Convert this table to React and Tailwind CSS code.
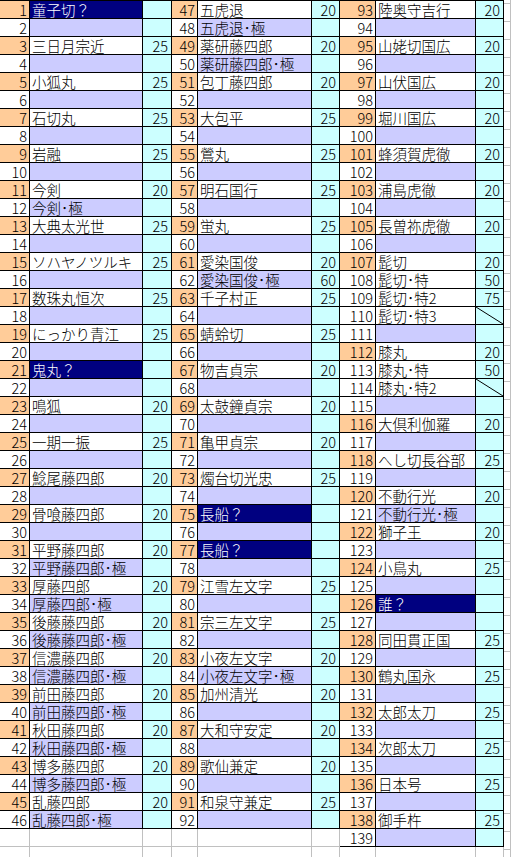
import React from "react";

const ORANGE = "bg-[#ffcc99]";
const LAV = "bg-[#ccccff]";
const CYAN = "bg-[#ccffff]";
const NAVY = "bg-[#000080] text-white";
const WHITE = "bg-white";

function std(num, name, value) {
  const odd = num % 2 === 1;
  return { num, name, value, numBg: odd ? ORANGE : WHITE, nameBg: odd ? WHITE : LAV };
}

const g1Names = {
  1: ["童子切？", ""], 3: ["三日月宗近", "25"], 5: ["小狐丸", "25"], 7: ["石切丸", "25"], 9: ["岩融", "25"],
  11: ["今剣", "20"], 12: ["今剣･極", ""], 13: ["大典太光世", "25"], 15: ["ソハヤノツルキ", "25"],
  17: ["数珠丸恒次", "25"], 19: ["にっかり青江", "25"], 21: ["鬼丸？", ""], 23: ["鳴狐", "20"],
  25: ["一期一振", "25"], 27: ["鯰尾藤四郎", "20"], 29: ["骨喰藤四郎", "20"], 31: ["平野藤四郎", "20"],
  32: ["平野藤四郎･極", ""], 33: ["厚藤四郎", "20"], 34: ["厚藤四郎･極", ""], 35: ["後藤藤四郎", "20"],
  36: ["後藤藤四郎･極", ""], 37: ["信濃藤四郎", "20"], 38: ["信濃藤四郎･極", ""], 39: ["前田藤四郎", "20"],
  40: ["前田藤四郎･極", ""], 41: ["秋田藤四郎", "20"], 42: ["秋田藤四郎･極", ""], 43: ["博多藤四郎", "20"],
  44: ["博多藤四郎･極", ""], 45: ["乱藤四郎", "20"], 46: ["乱藤四郎･極", ""],
};
const g2Names = {
  47: ["五虎退", "20"], 48: ["五虎退･極", ""], 49: ["薬研藤四郎", "20"], 50: ["薬研藤四郎･極", ""],
  51: ["包丁藤四郎", "20"], 53: ["大包平", "25"], 55: ["鶯丸", "25"], 57: ["明石国行", "25"], 59: ["蛍丸", "25"],
  61: ["愛染国俊", "20"], 62: ["愛染国俊･極", "60"], 63: ["千子村正", "25"], 65: ["蜻蛉切", "25"],
  67: ["物吉貞宗", "20"], 69: ["太鼓鐘貞宗", "20"], 71: ["亀甲貞宗", "20"], 73: ["燭台切光忠", "25"],
  75: ["長船？", ""], 77: ["長船？", ""], 79: ["江雪左文字", "25"], 81: ["宗三左文字", "25"],
  83: ["小夜左文字", "20"], 84: ["小夜左文字･極", ""], 85: ["加州清光", "20"], 87: ["大和守安定", "20"],
  89: ["歌仙兼定", "20"], 91: ["和泉守兼定", "25"],
};
const g3Names = {
  93: ["陸奥守吉行", "20"], 95: ["山姥切国広", "20"], 97: ["山伏国広", "20"], 99: ["堀川国広", "20"],
  101: ["蜂須賀虎徹", "20"], 103: ["浦島虎徹", "20"], 105: ["長曽祢虎徹", "20"], 107: ["髭切", "20"],
  108: ["髭切･特", "50"], 109: ["髭切･特2", "75"], 110: ["髭切･特3", "/"], 112: ["膝丸", "20"],
  113: ["膝丸･特", "50"], 114: ["膝丸･特2", "/"], 116: ["大倶利伽羅", "20"], 118: ["へし切長谷部", "25"],
  120: ["不動行光", "20"], 121: ["不動行光･極", ""], 122: ["獅子王", "20"], 124: ["小鳥丸", "25"],
  126: ["誰？", ""], 128: ["同田貫正国", "25"], 130: ["鶴丸国永", "25"], 132: ["太郎太刀", "25"],
  134: ["次郎太刀", "25"], 136: ["日本号", "25"], 138: ["御手杵", "25"],
};

const navyRows = new Set([1, 21, 75, 77, 126]);

function buildRows(from, to, names, group3) {
  const rows = [];
  for (let n = from; n <= to; n++) {
    const [name, value] = names[n] || ["", ""];
    let r;
    if (group3 && n >= 108 && n <= 115) {
      if (n === 112) r = { num: n, name, value, numBg: ORANGE, nameBg: WHITE };
      else if (n === 111 || n === 115) r = { num: n, name, value, numBg: WHITE, nameBg: LAV };
      else r = { num: n, name, value, numBg: WHITE, nameBg: WHITE };
    } else if (group3 && n >= 116) {
      const even = n % 2 === 0;
      r = { num: n, name, value, numBg: even ? ORANGE : WHITE, nameBg: even ? WHITE : LAV };
    } else {
      r = std(n, name, value);
    }
    if (navyRows.has(n)) r.nameBg = NAVY;
    rows.push(r);
  }
  return rows;
}

const groups = [
  { rows: buildRows(1, 46, g1Names, false), w: ["w-[30px]", "w-[113px]", "w-[29px]"], extra: 2 },
  { rows: buildRows(47, 92, g2Names, false), w: ["w-[26px]", "w-[114px]", "w-[28px]"], extra: 2 },
  { rows: buildRows(93, 139, g3Names, true), w: ["w-[36px]", "w-[100px]", "w-[28px]"], extra: 1 },
];

function Diagonal() {
  return (
    <svg className="absolute inset-0 w-full h-full" viewBox="0 0 100 100" preserveAspectRatio="none">
      <line x1="0" y1="0" x2="100" y2="100" stroke="black" strokeWidth="1" vectorEffect="non-scaling-stroke" />
    </svg>
  );
}

function Group({ g }) {
  const [wn, wm, wv] = g.w;
  return (
    <div className="flex flex-col shrink-0">
      <div className="flex h-[4px]">
        <div className={`${wn} border-r border-[#c0c0c0]`} />
        <div className={`${wm} border-r border-[#c0c0c0]`} />
        <div className={`${wv} border-r border-[#c0c0c0]`} />
      </div>
      <div className="flex flex-col border-t border-black">
        {g.rows.map((r) => (
          <div key={r.num} className="flex h-[18px]">
            <div className={`${wn} ${r.numBg} h-full border-r border-b border-black flex items-end justify-end pr-[2px]`}>
              <span className="block leading-[16px]">{r.num}</span>
            </div>
            <div className={`${wm} ${r.nameBg} h-full border-r border-b border-black flex items-end justify-start pl-[2px] whitespace-nowrap`}>
              <span className="block leading-[16px]">{r.name}</span>
            </div>
            <div className={`${wv} ${CYAN} h-full border-r border-b border-black flex items-end justify-end pr-[3px] relative`}>
              {r.value === "/" ? <Diagonal /> : <span className="block leading-[16px]">{r.value}</span>}
            </div>
          </div>
        ))}
      </div>
      {Array.from({ length: g.extra }).map((_, i) => (
        <div key={i} className="flex h-[18px] shrink-0">
          <div className={`${wn} border-r border-b border-[#c0c0c0]`} />
          <div className={`${wm} border-r border-b border-[#c0c0c0]`} />
          <div className={`${wv} border-r border-b border-[#c0c0c0]`} />
        </div>
      ))}
    </div>
  );
}

export default function App() {
  return (
    <div className="w-[511px] h-[857px] overflow-hidden bg-white flex text-black text-[14.5px] font-light font-['Noto_Sans_CJK_JP','Noto_Sans_CJK_SC',sans-serif]">
      {groups.map((g, i) => (
        <Group key={i} g={g} />
      ))}
      <div className="flex flex-col w-[7px] shrink-0">
        <div className="h-[4px] border-r border-b border-[#c0c0c0] shrink-0" />
        {Array.from({ length: 48 }).map((_, i) => (
          <div key={i} className="h-[18px] shrink-0 border-r border-b border-[#c0c0c0]" />
        ))}
      </div>
    </div>
  );
}
